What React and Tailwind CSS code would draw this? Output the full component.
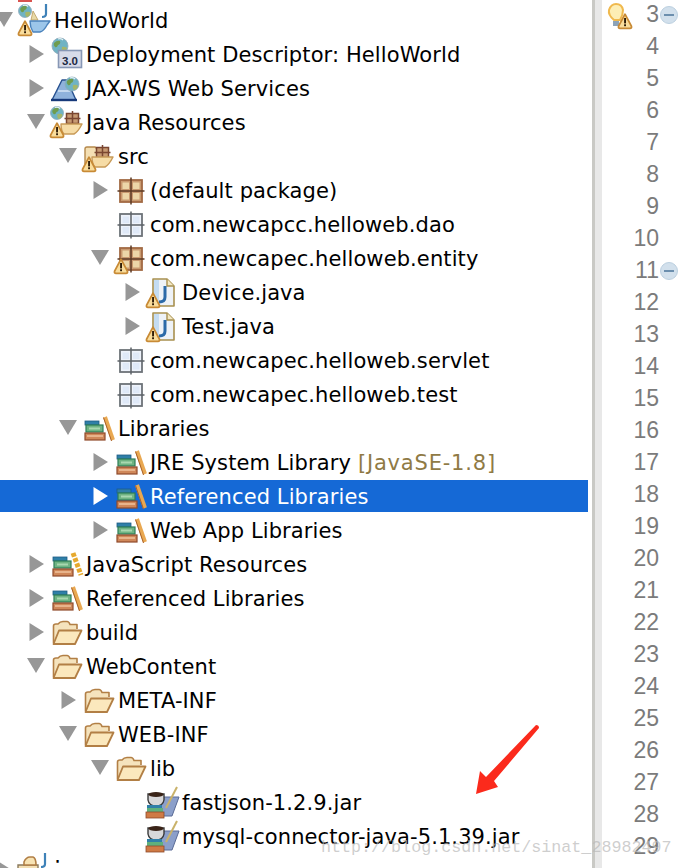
const Warn = ({ x = 0, y = 17 }) => (
  <g transform={`translate(${x} ${y})`}>
    <path d="M7 1.2 L13.4 13.2 Q14 15.4 12 15.4 L2 15.4 Q0 15.4 .6 13.2 Z" fill="#f9dd9c" stroke="#c88a35" strokeWidth="1.8" strokeLinejoin="round" />
    <rect x="6.1" y="5" width="1.9" height="5.4" fill="#2e1c08" />
    <rect x="6.1" y="11.3" width="1.9" height="1.9" fill="#2e1c08" />
  </g>
);
const Globe = ({ cx = 7, cy = 8, r = 7 }) => (
  <g>
    <circle cx={cx} cy={cy} r={r} fill="#6fb3c4" stroke="#8fa9bb" strokeWidth=".8" />
    <path d={`M${cx - r + 2} ${cy - 3} q3 -3 6 -2 q1 3 -2 4 q-1 3 -3 2 q-2 -2 -1 -4z`} fill="#6f9c4e" />
    <path d={`M${cx + 1} ${cy + 1} q4 -1 ${r - 2} 1 q-1 4 -4 4 q-2 -2 -1 -5z`} fill="#a5b66a" />
    <path d={`M${cx - 2} ${cy - r + 1} q3 -1 5 1`} stroke="#e8f3f5" strokeWidth="1.2" fill="none" />
  </g>
);
const Svg = ({ children }) => (
  <svg width="34" height="34" viewBox="0 0 34 34" className="shrink-0 overflow-visible">{children}</svg>
);
const Lattice = ({ brown }) => {
  const line = brown ? "#5c3a24" : "#5d6368";
  const border = brown ? "#a26a44" : "#6d7378";
  return (
    <g>
      <rect x="6" y="7" width="22" height="22" fill={brown ? "#c99a70" : "#eef3fb"} stroke={border} strokeWidth="1.8" />
      <rect x="8.5" y="9.5" width="6.5" height="6.5" fill={brown ? "#ecd6a8" : "#dfe9f8"} />
      <rect x="19" y="9.5" width="6.5" height="6.5" fill={brown ? "#ecd6a8" : "#dfe9f8"} />
      <rect x="8.5" y="20" width="6.5" height="6.5" fill={brown ? "#ecd6a8" : "#dfe9f8"} />
      <rect x="19" y="20" width="6.5" height="6.5" fill={brown ? "#ecd6a8" : "#dfe9f8"} />
      <path d="M17 4.5 V31.5 M3.5 18 H30.5" stroke={line} strokeWidth="1.5" />
    </g>
  );
};
const Tray = ({ x = 0, y = 0 }) => (
  <g transform={`translate(${x} ${y})`}>
    <path d="M2 9 H23 Q19 17 15 19 H5 Q2 16 2 9z" fill="#f6dca6" stroke="#c89a58" strokeWidth="1.4" strokeLinejoin="round" />
  </g>
);
const MiniPack = ({ x, y }) => (
  <g transform={`translate(${x} ${y})`} stroke="#7a4630" strokeWidth="1.5" fill="#c79a72">
    <rect x="1.5" y="1.5" width="12" height="10" />
    <path d="M7.5 -1 V11.5 M-.5 6.5 H15.5" fill="none" />
  </g>
);
const Project = () => (
  <Svg>
    <Globe cx={7} cy={8} r={6.5} />
    <path d="M28 1 V11 Q28 14 24 14" stroke="#3f82b8" strokeWidth="2.2" fill="none" />
    <path d="M15 8 L20 17 H13z" fill="#e9d9a6" stroke="#b89b5c" strokeWidth=".8" />
    <path d="M12 18 H32 L29 22 Q26 28 22 29 H15 Q12 24 12 18z" fill="#9cc6ea" stroke="#4b83bc" strokeWidth="1.4" strokeLinejoin="round" />
    <Warn x={0} y={17} />
  </Svg>
);
const Deploy = () => (
  <Svg>
    <Globe cx={10} cy={9} r={8} />
    <rect x="8.5" y="13.5" width="23" height="17" fill="#d7dbe9" stroke="#8797b5" strokeWidth="1.6" />
    <text x="20" y="27.5" textAnchor="middle" fontFamily="'Liberation Sans', sans-serif" fontWeight="700" fontSize="11.5" fill="#1d2a44">3.0</text>
  </Svg>
);
const Jax = () => (
  <Svg>
    <path d="M12 9 L2 29 H26 L17 9z" fill="#8fb2dc" stroke="#27508f" strokeWidth="1.4" strokeLinejoin="round" />
    <path d="M1 29 H27" stroke="#17397a" strokeWidth="2.4" />
    <path d="M8 20 H20" stroke="#dbe8f7" strokeWidth="1.4" />
    <Globe cx={22} cy={13} r={7} />
  </Svg>
);
const JavaRes = () => (
  <Svg>
    <Globe cx={7} cy={8} r={6.5} />
    <MiniPack x={15} y={7} />
    <Tray x={9} y={10} />
    <Warn x={0} y={17} />
  </Svg>
);
const SrcFolder = () => (
  <Svg>
    <path d="M3 25 V10 Q3 8 5 8 H13 L15 10 H22" fill="#f4dfb3" stroke="#b5894c" strokeWidth="1.4" />
    <MiniPack x={13} y={7} />
    <Tray x={8} y={9} />
    <Warn x={0} y={17} />
  </Svg>
);
const Pack = ({ brown, warn }) => (
  <Svg>
    <Lattice brown={brown} />
    {warn && <Warn x={0} y={17} />}
  </Svg>
);
const JavaFile = () => (
  <Svg>
    <path d="M7 4 H21 L28 11 V31 H7z" fill="#eef2f7" stroke="#a8904f" strokeWidth="1.6" strokeLinejoin="round" />
    <path d="M8 5 H13 V30 H8z" fill="#c4dcf2" />
    <path d="M21 4 V11 H28" fill="#f3e8c4" stroke="#a8904f" strokeWidth="1.4" />
    <path d="M19 11 V22 Q19 27 13 27" stroke="#2c6aa8" strokeWidth="3" fill="none" />
    <Warn x={0} y={17} />
  </Svg>
);
const Books = ({ js }) => (
  <Svg>
    <rect x="3" y="10" width="14" height="4" fill="#2f7fa8" stroke="#1e5c86" strokeWidth=".8" />
    <rect x="4" y="14" width="17" height="7" fill="#6fb383" stroke="#2e7d57" strokeWidth="1.2" />
    <rect x="7" y="16.5" width="11" height="2" fill="#a8d8b0" />
    <rect x="3" y="22" width="20" height="7" fill="#d0885a" stroke="#8f4a2a" strokeWidth="1.2" />
    <rect x="5" y="24" width="16" height="2" fill="#e8b48c" />
    {js ? (
      <path d="M23 6 L31 28" stroke="#e6a92e" strokeWidth="5" strokeDasharray="4 1.5" />
    ) : (
      <path d="M23 6 L31 29" stroke="#e9a851" strokeWidth="4" />
    )}
    {!js && <path d="M21.5 6.5 L29.5 30" stroke="#a8612c" strokeWidth="1" />}
  </Svg>
);
const Folder = () => (
  <Svg>
    <path d="M3.5 28 V11 Q3.5 9 6 9 H8 Q10 6.5 13 6.5 H17 Q19 6.5 20 9.5 H27 V14" fill="#f5e3bd" stroke="#b27f45" strokeWidth="1.6" strokeLinejoin="round" />
    <path d="M3.5 29 L9 15.5 H31.5 L25 29z" fill="#fbe8bd" stroke="#b27f45" strokeWidth="1.8" strokeLinejoin="round" />
  </Svg>
);
const Jar = () => (
  <Svg>
    <path d="M12 31 L18 12 H33 L26 31z" fill="#8b9fca" stroke="#5a6b96" strokeWidth="1" />
    <path d="M20 23 L31 2" stroke="#c9b26a" strokeWidth="2" />
    <path d="M2 9 H18 V15 Q17 21 10 21 Q3 21 2 15z" fill="#d8d8da" stroke="#3a3a3a" strokeWidth="1.4" />
    <ellipse cx="10" cy="9.5" rx="7.5" ry="2.5" fill="#3a2418" />
    <rect x="1" y="20" width="15" height="3" fill="#2f7fa8" />
    <rect x="1" y="23" width="16" height="4" fill="#5fb07c" />
    <rect x="0" y="27" width="18" height="6" fill="#cf7a45" stroke="#8f4a2a" strokeWidth=".8" />
  </Svg>
);
const Partial = () => (
  <Svg>
    <path d="M0 12 H20 V34 H0z" fill="#f3dfb4" stroke="#8a7a5c" strokeWidth="1.4" />
    <path d="M6 9 Q8 4 12 4 H15 Q18 5 18 12 H6z" fill="#f7e3b4" stroke="#b27f45" strokeWidth="1.6" />
    <path d="M27 0 V11 Q27 14 23 14" stroke="#3f82b8" strokeWidth="2.2" fill="none" />
  </Svg>
);

const rows = [
  { d: 0, a: "down", t: "HelloWorld", i: <Project /> },
  { d: 1, a: "right", t: "Deployment Descriptor: HelloWorld", i: <Deploy /> },
  { d: 1, a: "right", t: "JAX-WS Web Services", i: <Jax /> },
  { d: 1, a: "down", t: "Java Resources", i: <JavaRes /> },
  { d: 2, a: "down", t: "src", i: <SrcFolder /> },
  { d: 3, a: "right", t: "(default package)", i: <Pack brown /> },
  { d: 3, t: "com.newcapcc.helloweb.dao", i: <Pack /> },
  { d: 3, a: "down", t: "com.newcapec.helloweb.entity", i: <Pack brown warn /> },
  { d: 4, a: "right", t: "Device.java", i: <JavaFile /> },
  { d: 4, a: "right", t: "Test.java", i: <JavaFile /> },
  { d: 3, t: "com.newcapec.helloweb.servlet", i: <Pack /> },
  { d: 3, t: "com.newcapec.helloweb.test", i: <Pack /> },
  { d: 2, a: "down", t: "Libraries", i: <Books /> },
  { d: 3, a: "right", t: "JRE System Library", extra: "[JavaSE-1.8]", i: <Books /> },
  { d: 3, a: "right", t: "Referenced Libraries", sel: true, i: <Books /> },
  { d: 3, a: "right", t: "Web App Libraries", i: <Books /> },
  { d: 1, a: "right", t: "JavaScript Resources", i: <Books js /> },
  { d: 1, a: "right", t: "Referenced Libraries", i: <Books /> },
  { d: 1, a: "right", t: "build", i: <Folder /> },
  { d: 1, a: "down", t: "WebContent", i: <Folder /> },
  { d: 2, a: "right", t: "META-INF", i: <Folder /> },
  { d: 2, a: "down", t: "WEB-INF", i: <Folder /> },
  { d: 3, a: "down", t: "lib", i: <Folder /> },
  { d: 4, t: "fastjson-1.2.9.jar", i: <Jar /> },
  { d: 4, t: "mysql-connector-java-5.1.39.jar", i: <Jar /> },
  { d: 0, t: ":", a: "right", last: true, i: <Partial /> },
];

const Arrow = ({ a, sel }) => (
  <svg width="18" height="18" viewBox="0 0 18 18" className="shrink-0 -ml-[5px] mr-[5px]">
    {a === "right" && <path d="M2.5 0 L17 9 L2.5 18z" fill={sel ? "#ffffff" : "#979797"} />}
    {a === "down" && <path d="M0 1 H18 L9 16z" fill="#979797" />}
  </svg>
);

const Row = ({ r }) => (
  <div
    className={`h-[32px] flex items-center whitespace-nowrap ${r.sel ? "bg-[#1569d6] text-white" : "text-black"}`}
    style={{ paddingLeft: r.d * 32 }}
  >
    <div className="w-[18px] shrink-0 flex">{r.a && <Arrow a={r.a} sel={r.sel} />}</div>
    <div className="shrink-0">{r.i}</div>
    <span className={r.last ? "ml-[2px] self-start" : "ml-[2px] pt-[2px] tracking-[0.1px]"}>{r.t}</span>
    {r.extra && <span className="ml-[7px] pt-[2px] tracking-[0.8px] text-[#8f7a45]">{r.extra}</span>}
  </div>
);

const lines = Array.from({ length: 27 }, (_, i) => i + 3);

export default function App() {
  return (
    <div className="relative flex h-[868px] w-[682px] overflow-hidden bg-white font-['DejaVu_Sans',sans-serif] text-[21px] leading-none">
      <div className="w-[592px] shrink-0 pr-[4px]">
        <div className="ml-[18px] h-[2px] w-[14px] bg-[#d9534f]" />
        <div className="flex flex-col gap-[2px] pt-[2px]">
          {rows.map((r, i) => <Row key={i} r={r} />)}
        </div>
      </div>
      <div className="w-[3px] shrink-0 bg-[#c9c9c5]" />
      <div className="w-[7px] shrink-0 bg-[#e8e8e8]" />
      <div className="w-[57px] shrink-0 text-right font-['Liberation_Sans',sans-serif] text-[23px] font-normal text-[#7b7b7b]">
        {lines.map((n) => (
          <div key={n} className="h-[32px] leading-[28px]">{n}</div>
        ))}
      </div>
      <svg width="34" height="34" viewBox="0 0 34 34" className="absolute left-[606px] top-[2px]">
        <path d="M8 18 Q2 13 3 8 Q5 2 10 2 Q16 2 17 8 Q17 13 14 18z" fill="#fdeeb5" stroke="#f0b94e" strokeWidth="2" />
        <rect x="7" y="19" width="6" height="5" fill="#8ca3b8" />
        <Warn x={12} y={11} />
      </svg>
      <div className="absolute left-[660px] top-[6px] h-[18px] w-[18px] rounded-full border border-[#bcd0e0] bg-[#d2e0ec]"><div className="mx-auto mt-[7px] h-[2px] w-[10px] bg-[#6c8fae]" /></div>
      <div className="absolute left-[660px] top-[262px] h-[18px] w-[18px] rounded-full border border-[#bcd0e0] bg-[#d2e0ec]"><div className="mx-auto mt-[7px] h-[2px] w-[10px] bg-[#6c8fae]" /></div>
      <svg width="682" height="868" viewBox="0 0 682 868" className="pointer-events-none absolute left-0 top-0">
        <path d="M536 725 Q539 725 539 728 L494 781 L498 787 L476 794 L480 771 L486 777z" fill="#fb2a1c" />
      </svg>
      <div className="pointer-events-none absolute left-[321px] top-[838px] whitespace-nowrap font-['Liberation_Mono',monospace] text-[16.7px] leading-[20px] text-[#b9b9b9]/70">http://blog.csdn.net/sinat_28982497</div>
    </div>
  );
}
